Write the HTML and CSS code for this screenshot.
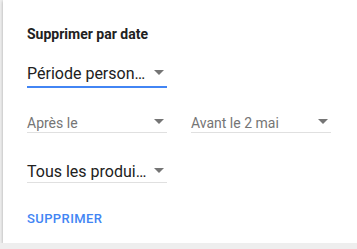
FILE: index.html
```html
<!DOCTYPE html>
<html lang="fr">
<head>
    <meta charset="UTF-8">
    <meta name="viewport" content="width=device-width, initial-scale=1.0">
    <title>Supprimer par date</title>
    <link rel="stylesheet" href="styles.css">
</head>
<body>
    <div class="card">
        <h2 class="title">Supprimer par date</h2>

        <div class="select select-large active">
            <span class="value">Période person…</span>
            <span class="arrow"></span>
        </div>

        <div class="row">
            <div class="select select-small">
                <span class="value muted">Après le</span>
                <span class="arrow"></span>
            </div>
            <div class="select select-small">
                <span class="value muted">Avant le 2 mai</span>
                <span class="arrow"></span>
            </div>
        </div>

        <div class="select select-large products">
            <span class="value">Tous les produi…</span>
            <span class="arrow"></span>
        </div>

        <button class="action">SUPPRIMER</button>
    </div>
</body>
</html>
```

FILE: styles.css
```css
*{
    box-sizing: border-box;
}
body{
    margin: 0;
    background-color: #eeeeee;
    font-family: Roboto, "Noto Sans", sans-serif;
    overflow: hidden;
}
.card{
    background-color: #fff;
    margin-left: 3px;
    height: 243px;
    padding: 26px 24px 0;
    box-shadow: 0 1px 3px rgba(0, 0, 0, 0.3);
}
.title{
    margin: 0 0 22px;
    font-size: 14px;
    line-height: 16px;
    font-weight: 700;
    color: #212121;
}
.select{
    display: flex;
    align-items: center;
    width: 140px;
    border-bottom: 1px solid #e0e0e0;
}
.select .value{
    flex: 1;
    white-space: nowrap;
}
.select-large{
    font-size: 16px;
    line-height: 20px;
    color: #212121;
}
.select.active{
    padding-bottom: 2px;
    border-bottom: 2px solid #4285f4;
}
.select-small{
    font-size: 14px;
    line-height: 18px;
}
.muted{
    color: #757575;
}
.arrow{
    width: 0;
    height: 0;
    margin: 0 3px 3px 0;
    border-left: 5px solid transparent;
    border-right: 5px solid transparent;
    border-top: 5px solid #757575;
}
.row{
    display: flex;
    gap: 24px;
    margin-top: 26px;
}
.products{
    margin-top: 29px;
}
.action{
    display: block;
    margin-top: 28px;
    padding: 0;
    border: 0;
    background: none;
    font-family: inherit;
    font-size: 13px;
    line-height: 16px;
    font-weight: 500;
    letter-spacing: 0.4px;
    color: #4285f4;
    cursor: pointer;
}
```
